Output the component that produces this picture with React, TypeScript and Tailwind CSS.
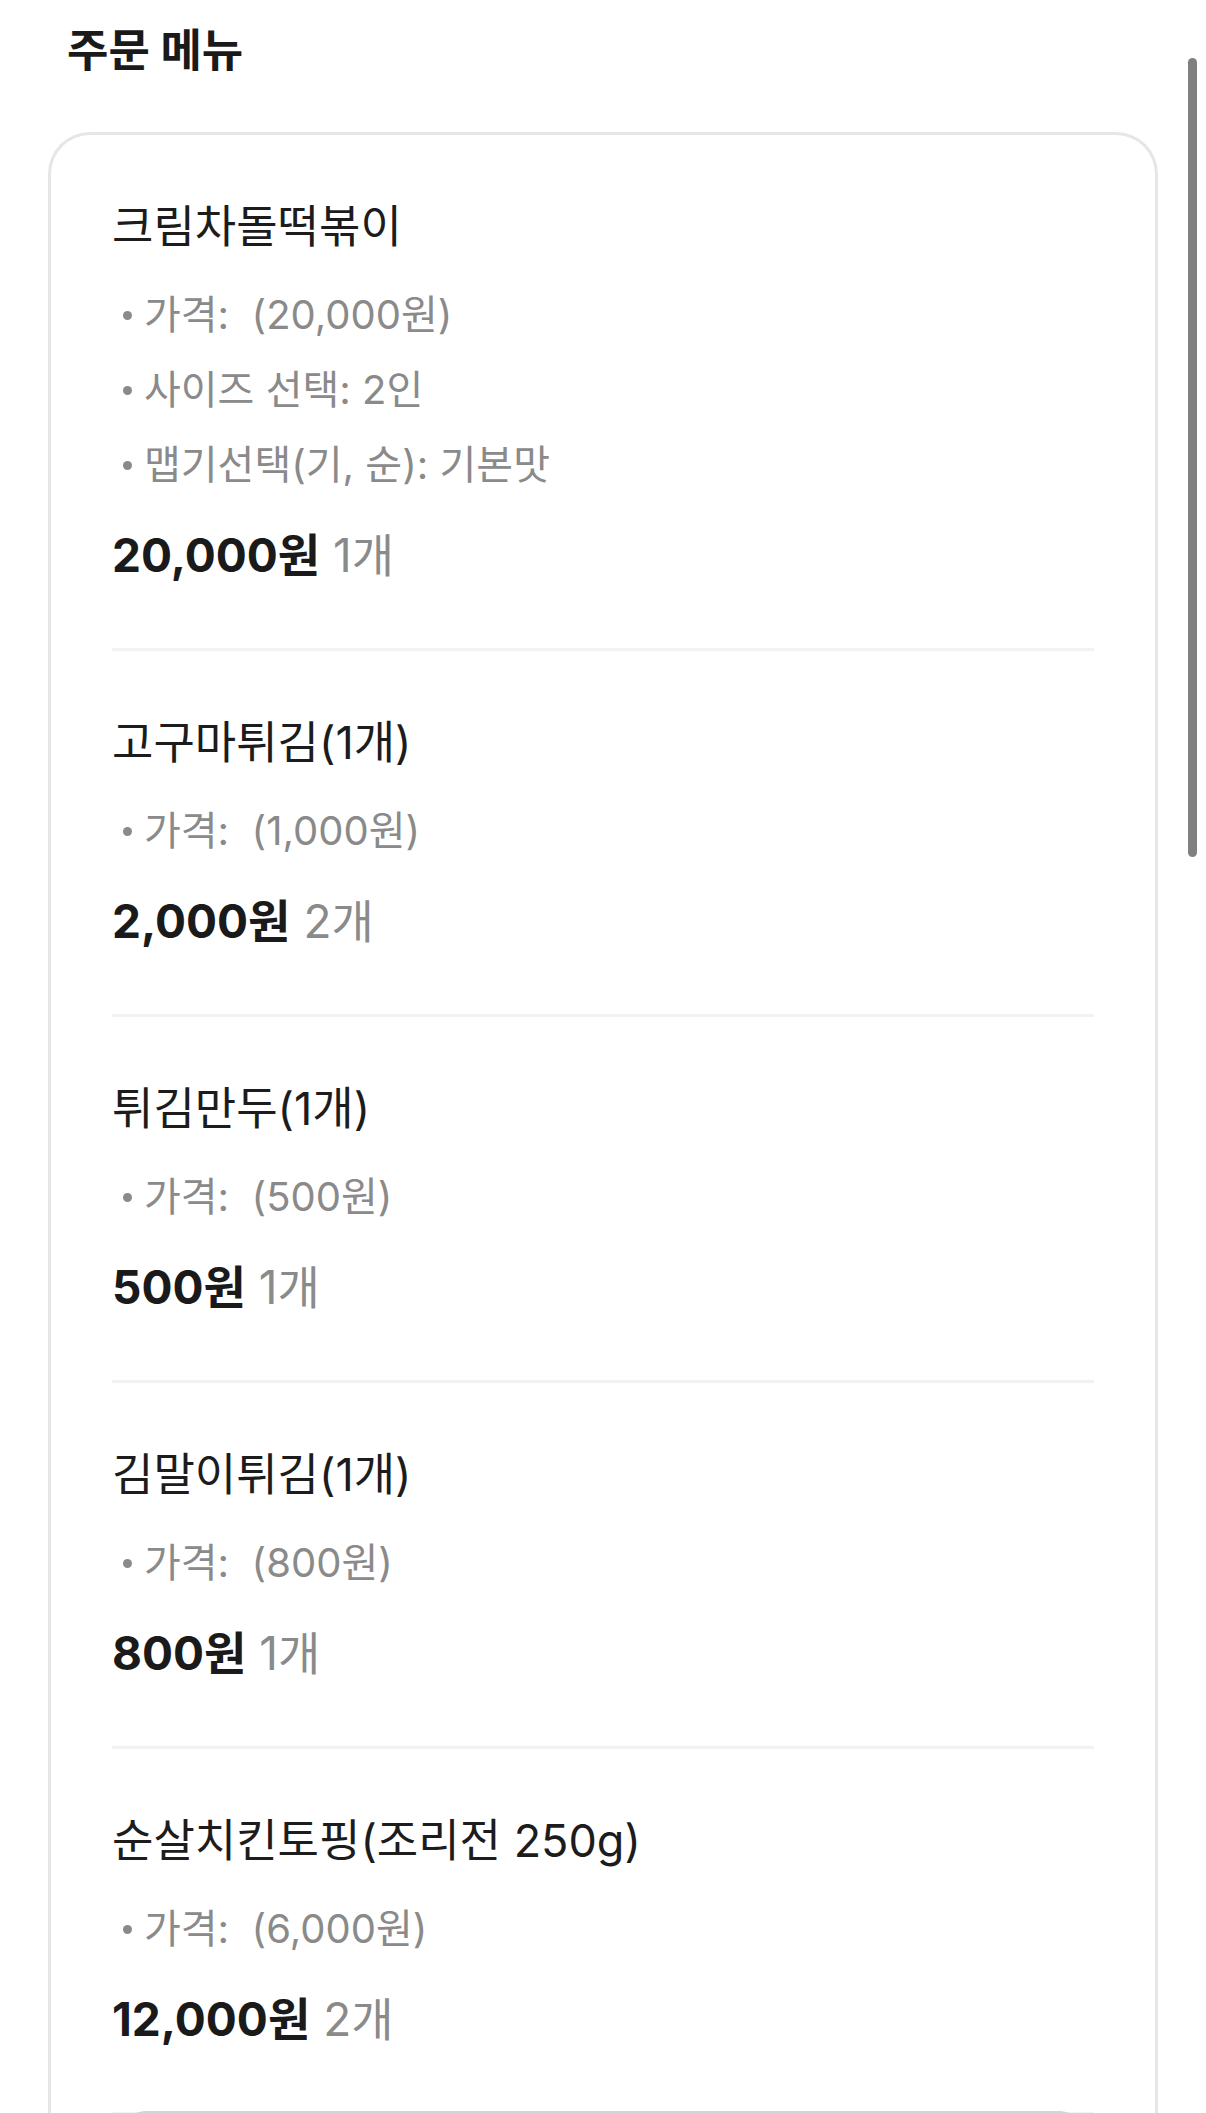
import React from "react";

type Item = {
  name: string;
  options: string[];
  price: string;
  qty: string;
};

const items: Item[] = [
  {
    name: "크림차돌떡볶이",
    options: ["가격:  (20,000원)", "사이즈 선택: 2인", "맵기선택(기, 순): 기본맛"],
    price: "20,000원",
    qty: "1개",
  },
  { name: "고구마튀김(1개)", options: ["가격:  (1,000원)"], price: "2,000원", qty: "2개" },
  { name: "튀김만두(1개)", options: ["가격:  (500원)"], price: "500원", qty: "1개" },
  { name: "김말이튀김(1개)", options: ["가격:  (800원)"], price: "800원", qty: "1개" },
  { name: "순살치킨토핑(조리전 250g)", options: ["가격:  (6,000원)"], price: "12,000원", qty: "2개" },
];

const font = { fontFamily: 'Inter, "Noto Sans CJK KR", "Noto Sans", sans-serif' };

export default function App() {
  return (
    <div className="relative w-[1206px] h-[2113px] overflow-hidden bg-white" style={font}>
      <div className="pt-[21px] pl-[67px]">
        <h1 className="text-[45px] leading-[60px] font-bold text-[#1a1a1a]">주문 메뉴</h1>
      </div>
      <div className="mt-[51px] ml-[48px] w-[1110px] rounded-t-[42px] border-[3px] border-b-0 border-[#e6e6e6] pb-[200px]">
        {items.map((it, i) => (
          <div key={i} className="mx-[61px] pt-[62px] pb-[63px] border-b-[3px] border-[#f2f2f2]">
            <div className="text-[45px] leading-[60px] text-[#1c1c1c]">{it.name}</div>
            <div className="mt-[28px] flex flex-col gap-[15px]">
              {it.options.map((o, j) => (
                <div key={j} className="flex items-center text-[40px] leading-[60px] text-[#8a8a8a]">
                  <span className="ml-[11px] mr-[12px] w-[9px] h-[9px] rounded-full bg-[#8a8a8a]" />
                  <span className="whitespace-pre">{o}</span>
                </div>
              ))}
            </div>
            <div className="mt-[30px] text-[46px] leading-[60px]">
              <span className="font-bold text-[#1a1a1a]">{it.price}</span>
              <span className="ml-[13px] text-[#8a8a8a]">{it.qty}</span>
            </div>
          </div>
        ))}
      </div>
      <div className="absolute left-[125px] top-[2111px] w-[955px] h-[60px] rounded-t-[20px] border-t-[3px] border-[#d5d5d5] bg-white" />
      <div className="absolute left-[1188px] top-[58px] w-[9px] h-[799px] rounded-full bg-[#808080]" />
    </div>
  );
}
